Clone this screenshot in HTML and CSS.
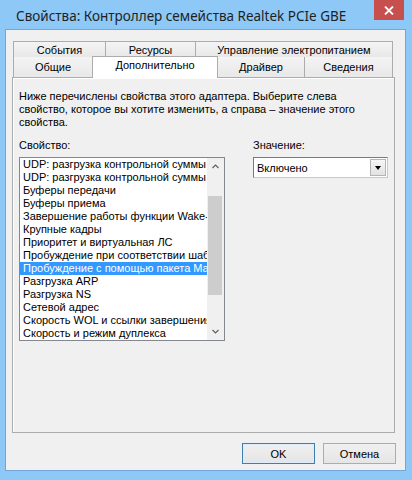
FILE: index.html
```html
<!doctype html>
<html lang="ru">
<head>
    <meta charset="UTF-8">
    <title>Свойства: Контроллер семейства Realtek PCIe GBE</title>
    <link rel="stylesheet" href="styles.css">
</head>
<body>
    <div class="window">
        <div class="titlebar">
            <span class="title">Свойства: Контроллер семейства Realtek PCIe GBE</span>
            <button class="close-btn" aria-label="Закрыть">
                <svg width="10" height="9" viewBox="0 0 10 9">
                    <path d="M1 0.5 L9 8.5 M9 0.5 L1 8.5" stroke="#fff" stroke-width="1.8" fill="none"/>
                </svg>
            </button>
        </div>

        <div class="client">
            <div class="tabs">
                <div class="tab-row">
                    <div class="tab tab-events">События</div>
                    <div class="tab tab-res">Ресурсы</div>
                    <div class="tab tab-power">Управление электропитанием</div>
                </div>
                <div class="tab-row tab-row-front">
                    <div class="tab tab-general">Общие</div>
                    <div class="tab tab-advanced active">Дополнительно</div>
                    <div class="tab tab-driver">Драйвер</div>
                    <div class="tab tab-details">Сведения</div>
                </div>
            </div>

            <div class="panel">
                <p class="desc">Ниже перечислены свойства этого адаптера. Выберите слева свойство, которое вы хотите изменить, а справа – значение этого свойства.</p>

                <div class="fields">
                    <div class="col-prop">
                        <div class="label">Свойство:</div>
                        <div class="listbox">
                            <ul class="items">
                                <li>UDP: разгрузка контрольной суммы (IPv4)</li>
                                <li>UDP: разгрузка контрольной суммы (IPv6)</li>
                                <li>Буферы передачи</li>
                                <li>Буферы приема</li>
                                <li>Завершение работы функции Wake-On-LAN</li>
                                <li>Крупные кадры</li>
                                <li>Приоритет и виртуальная ЛС</li>
                                <li>Пробуждение при соответствии шаблону</li>
                                <li class="selected">Пробуждение с помощью пакета Magic Packet</li>
                                <li>Разгрузка ARP</li>
                                <li>Разгрузка NS</li>
                                <li>Сетевой адрес</li>
                                <li>Скорость WOL и ссылки завершения работы</li>
                                <li>Скорость и режим дуплекса</li>
                            </ul>
                            <div class="scrollbar">
                                <div class="sb-arrow">
                                    <svg width="7" height="5" viewBox="0 0 7 5"><path d="M0.5 4 L3.5 1 L6.5 4" stroke="#606060" stroke-width="1.2" fill="none"/></svg>
                                </div>
                                <div class="sb-track">
                                    <div class="sb-thumb"></div>
                                </div>
                                <div class="sb-arrow">
                                    <svg width="7" height="5" viewBox="0 0 7 5"><path d="M0.5 1 L3.5 4 L6.5 1" stroke="#606060" stroke-width="1.2" fill="none"/></svg>
                                </div>
                            </div>
                        </div>
                    </div>

                    <div class="col-value">
                        <div class="label">Значение:</div>
                        <div class="combo">
                            <span class="combo-text">Включено</span>
                            <span class="combo-btn"><span class="combo-arrow"></span></span>
                        </div>
                    </div>
                </div>
            </div>

            <div class="buttons">
                <button class="btn btn-default">OK</button>
                <button class="btn">Отмена</button>
            </div>
        </div>
    </div>
</body>
</html>
```

FILE: styles.css
```css
:root {
    --frame-color: #8ec8f6;
    --face-color: #f0f0f0;
    --tab-border: #acacac;
    --text-color: #000;
}

body {
    margin: 0;
    background-color: var(--frame-color);
    font-family: 'Liberation Sans', Arial, sans-serif;
    font-size: 11px;
    color: var(--text-color);
}

.window {
    width: 412px;
    height: 480px;
    display: flex;
    flex-direction: column;
}

.titlebar {
    height: 29px;
    display: flex;
    justify-content: space-between;
    align-items: flex-start;
}

.title {
    font-family: 'Noto Sans', sans-serif;
    font-size: 13.5px;
    line-height: 20px;
    color: #1f1f1f;
    margin: 6px 0 0 16px;
    white-space: nowrap;
}

.close-btn {
    width: 30px;
    height: 20px;
    margin-right: 8px;
    padding: 0;
    border: none;
    background-color: #c7504f;
    display: flex;
    justify-content: center;
    align-items: center;
}

.client {
    flex: 1;
    margin: 0 6px 9px 5px;
    border: 1px solid #74a5d6;
    background-color: var(--face-color);
    padding: 11px 10px 0 6px;
}

/* tabs */
.tabs {
    margin: 0 2px 0 1px;
}

.tab-row {
    display: flex;
    height: 16px;
}

.tab-row-front {
    height: 20px;
}

.tab {
    box-sizing: border-box;
    border: 1px solid var(--tab-border);
    border-bottom: none;
    background: linear-gradient(#f4f4f4, #e8e8e8);
    text-align: center;
    line-height: 16px;
    white-space: nowrap;
}

.tab + .tab {
    margin-left: -1px;
}

.tab-row-front .tab {
    line-height: 20px;
    border-top: none;
}

.tab-events { width: 93px; }
.tab-res { width: 91px; }
.tab-power { flex: 1; }

.tab-general { width: 80px; }
.tab-advanced { width: 126px; }
.tab-driver { width: 88px; }
.tab-details { flex: 1; }

.tab-row-front .tab.active {
    position: relative;
    z-index: 1;
    background: #fff;
    border-top: 1px solid var(--tab-border);
    margin-top: -1px;
    height: 22px;
    line-height: 17px;
}

/* page */
.panel {
    box-sizing: border-box;
    height: 356px;
    border: 1px solid var(--tab-border);
    box-shadow: inset 1px 1px 0 #fff;
    padding: 12px 6px 0 6px;
}

.desc {
    margin: 0;
    line-height: 13px;
}

.fields {
    display: flex;
    gap: 28px;
    margin-top: 10px;
}

.label {
    line-height: 13px;
    margin-bottom: 5px;
}

.col-prop {
    width: 206px;
}

.col-value {
    width: 136px;
}

.listbox {
    box-sizing: border-box;
    height: 184px;
    border: 1px solid #828790;
    background-color: #fff;
    display: flex;
}

.items {
    flex: 1;
    min-width: 0;
    list-style: none;
    margin: 0;
    padding: 0;
    overflow: hidden;
}

.items li {
    height: 13px;
    line-height: 13px;
    padding-left: 3px;
    white-space: nowrap;
    overflow: hidden;
}

.items li.selected {
    background-color: #3399ff;
    color: #fff;
}

.scrollbar {
    width: 17px;
    display: flex;
    flex-direction: column;
    background-color: #f0f0f0;
}

.sb-arrow {
    height: 17px;
    display: flex;
    justify-content: center;
    align-items: center;
}

.sb-track {
    flex: 1;
    padding-top: 21px;
}

.sb-thumb {
    height: 99px;
    margin: 0 2px 0 1px;
    background-color: #cdcdcd;
}

.combo {
    box-sizing: border-box;
    height: 21px;
    margin-top: 1px;
    border: 1px solid #7a7a7a;
    border-right-color: #c8c8c8;
    border-bottom-color: #c8c8c8;
    background-color: #fff;
    display: flex;
    align-items: center;
}

.combo-text {
    flex: 1;
    padding-left: 3px;
}

.combo-btn {
    box-sizing: border-box;
    width: 16px;
    height: 17px;
    margin-right: 1px;
    border: 1px solid #b5b5b5;
    background: linear-gradient(#f7f7f7, #e2e2e2);
    display: flex;
    justify-content: center;
    align-items: center;
}

.combo-arrow {
    width: 0;
    height: 0;
    border-left: 3.5px solid transparent;
    border-right: 3.5px solid transparent;
    border-top: 4px solid #000;
}

/* dialog buttons */
.buttons {
    display: flex;
    justify-content: flex-end;
    gap: 8px;
    margin: 10px -1px 0 0;
}

.btn {
    box-sizing: border-box;
    width: 73px;
    height: 21px;
    padding: 0;
    font-family: 'Liberation Sans', Arial, sans-serif;
    font-size: 11px;
    color: #000;
    border: 1px solid #acacac;
    background: linear-gradient(#f0f0f0, #e5e5e5);
}

.btn-default {
    border-color: #3c7fb1;
    box-shadow: inset 0 0 0 1px #dcecfc;
}
```
